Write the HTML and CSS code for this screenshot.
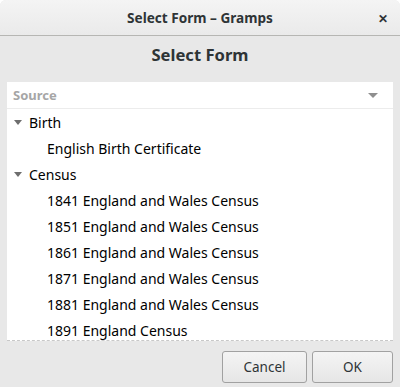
FILE: index.html
```html
<!DOCTYPE html>
<html lang="en">
<head>
  <meta charset="UTF-8" />
  <title>Select Form - Gramps</title>
  <link rel="stylesheet" href="styles.css">
</head>
<body>
  <div class="window">
    <div class="titlebar">
      <span class="title">Select Form – Gramps</span>
      <span class="close">✕</span>
    </div>

    <div class="content">
      <h2 class="heading">Select Form</h2>

      <div class="tree">
        <div class="tree-header">
          <span>Source</span>
          <span class="sort-arrow"></span>
        </div>
        <div class="tree-body">
          <div class="row parent"><span class="expander"></span>Birth</div>
          <div class="row child">English Birth Certificate</div>
          <div class="row parent"><span class="expander"></span>Census</div>
          <div class="row child">1841 England and Wales Census</div>
          <div class="row child">1851 England and Wales Census</div>
          <div class="row child">1861 England and Wales Census</div>
          <div class="row child">1871 England and Wales Census</div>
          <div class="row child">1881 England and Wales Census</div>
          <div class="row child">1891 England Census</div>
        </div>
      </div>

      <div class="buttons">
        <button class="btn cancel">Cancel</button>
        <button class="btn ok">OK</button>
      </div>
    </div>
  </div>
</body>
</html>
```

FILE: styles.css
```css
* {
  margin: 0;
  padding: 0;
  box-sizing: border-box;
}

body {
  width: 400px;
  height: 387px;
  overflow: hidden;
  background: #fff;
  font-family: "Noto Sans", "Open Sans", sans-serif;
  font-size: 13px;
  color: #2e3436;
}

.window {
  height: 387px;
  display: flex;
  flex-direction: column;
  background: #e8e8e8;
  border-radius: 6px 6px 0 0;
  overflow: hidden;
}

.titlebar {
  height: 36px;
  flex: none;
  display: flex;
  align-items: center;
  justify-content: center;
  position: relative;
  background: linear-gradient(#f4f4f4, #eaeaea);
  border-bottom: 1px solid #b6b6b3;
}

.title {
  font-weight: bold;
  font-size: 13.6px;
  color: #2e3436;
}

.close {
  position: absolute;
  right: 12px;
  top: 10px;
  font-size: 12px;
  font-weight: bold;
  color: #2e3436;
}

.content {
  flex: 1;
  display: flex;
  flex-direction: column;
  padding: 0 7px;
}

.heading {
  font-size: 16.6px;
  font-weight: bold;
  text-align: center;
  height: 46px;
  line-height: 38px;
  color: #2e3436;
}

.tree {
  background: #fff;
  height: 259px;
  display: flex;
  flex-direction: column;
  border-bottom: 1px dashed #c8c8c8;
}

.tree-header {
  height: 27px;
  flex: none;
  display: flex;
  align-items: center;
  justify-content: space-between;
  padding: 0 15px 0 6px;
  color: #a6a6a6;
  font-weight: bold;
  border-bottom: 1px solid #ececec;
}

.sort-arrow {
  width: 0;
  height: 0;
  border-left: 5px solid transparent;
  border-right: 5px solid transparent;
  border-top: 5px solid #8f8f8f;
}

.tree-body {
  flex: 1;
  overflow: hidden;
}

.row {
  height: 26px;
  display: flex;
  align-items: center;
  color: #000;
  font-size: 14px;
  white-space: nowrap;
}

.row.parent {
  padding-left: 6px;
}

.row.child {
  padding-left: 40px;
}

.expander {
  width: 0;
  height: 0;
  margin-right: 7px;
  margin-left: 1px;
  border-left: 4px solid transparent;
  border-right: 4px solid transparent;
  border-top: 5px solid #6e6e6e;
}

.buttons {
  display: flex;
  justify-content: flex-end;
  gap: 5px;
  padding-top: 10px;
}

.btn {
  height: 32px;
  font-family: inherit;
  font-size: 13.5px;
  color: #2e3436;
  background: linear-gradient(#f4f4f4, #e6e6e6);
  border: 1px solid #a1a1a1;
  border-radius: 3px;
}

.cancel {
  width: 85px;
}

.ok {
  width: 81px;
}
```
